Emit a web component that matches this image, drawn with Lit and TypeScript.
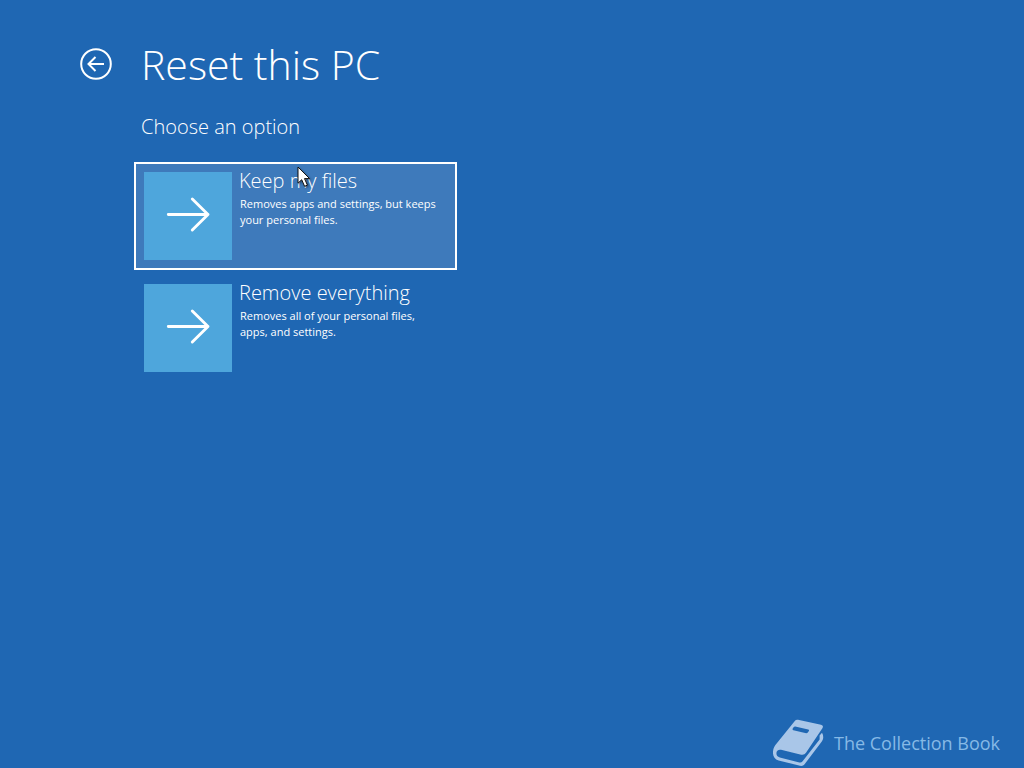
import { LitElement, html, css, svg } from "lit";
import { customElement, property, state } from "lit/decorators.js";
import { classMap } from "lit/directives/class-map.js";

interface ResetOption {
  id: string;
  title: string;
  description: string;
}

const OPTIONS: ResetOption[] = [
  {
    id: "keep",
    title: "Keep my files",
    description: "Removes apps and settings, but keeps your personal files.",
  },
  {
    id: "remove",
    title: "Remove everything",
    description: "Removes all of your personal files, apps, and settings.",
  },
];

@customElement("option-tile")
export class OptionTile extends LitElement {
  @property() heading = "";
  @property() description = "";
  @property({ type: Boolean }) selected = false;

  static styles = css`
    :host {
      display: block;
    }
    .tile {
      display: flex;
      align-items: flex-start;
      gap: 7px;
      box-sizing: border-box;
      width: 100%;
      padding: 8px;
      border: 2px solid transparent;
      background: none;
      color: #fff;
      font: inherit;
      text-align: left;
      outline: none;
      cursor: pointer;
    }
    .tile.selected {
      border-color: #fff;
      background: #3e7abb;
    }
    .icon {
      flex: none;
      width: 88px;
      height: 88px;
      background: #4ea6dc;
    }
    .icon svg {
      display: block;
    }
    .text {
      display: flex;
      flex-direction: column;
      min-width: 0;
      padding-right: 8px;
    }
    .heading {
      font-size: 20px;
      line-height: 18px;
      font-weight: 300;
      padding-bottom: 6px;
    }
    .description {
      font-size: 11px;
      line-height: 16px;
      padding-left: 1px;
    }
  `;

  render() {
    return html`
      <button class=${classMap({ tile: true, selected: this.selected })} type="button">
        <span class="icon">
          <svg width="88" height="88" viewBox="0 0 88 88" fill="none" aria-hidden="true">
            <path
              d="M24.3 42.5H64M48.3 27L64 42.5L48.3 58"
              stroke="#fff"
              stroke-width="2.9"
              stroke-linecap="round"
              stroke-linejoin="round"
            />
          </svg>
        </span>
        <span class="text">
          <span class="heading">${this.heading}</span>
          <span class="description">${this.description}</span>
        </span>
      </button>
    `;
  }
}

const pointer = svg`
  <path
    d="M1 1V17.2L4.7 13.7L7.6 20.3L10.4 19.1L7.5 12.6H12.6Z"
    fill="#fff" stroke="#111" stroke-width="1"
  />
`;

@customElement("app-root")
export class AppRoot extends LitElement {
  @state() private selected = "keep";

  static styles = css`
    :host {
      display: flex;
      flex-direction: column;
      box-sizing: border-box;
      min-height: 100vh;
      background: #1f67b3;
      color: #fff;
      font-family: "Open Sans", "Noto Sans", sans-serif;
    }
    .page {
      flex: 1;
      padding: 34px 80px 0;
    }
    .header {
      display: flex;
      align-items: center;
      gap: 29px;
    }
    .back {
      width: 32px;
      height: 32px;
      padding: 0;
      border: 0;
      background: none;
      cursor: pointer;
    }
    .back svg {
      display: block;
    }
    .title {
      margin: 0;
      font-size: 41px;
      line-height: 60px;
      font-weight: 300;
    }
    .subtitle {
      margin: 19px 0 0 61px;
      font-size: 20px;
      line-height: 28px;
      font-weight: 300;
    }
    .options-area {
      position: relative;
      max-width: 323px;
      margin: 21px 0 0 54px;
    }
    .options {
      display: flex;
      flex-direction: column;
      gap: 4px;
      margin: 0;
      padding: 0;
      list-style: none;
    }
    .pointer {
      position: absolute;
      left: 163px;
      top: 4px;
      pointer-events: none;
      filter: drop-shadow(1px 1px 1px rgba(0, 0, 0, 0.4));
    }
    .credit {
      display: flex;
      align-items: center;
      justify-content: flex-end;
      gap: 9px;
      padding: 0 24px 0 0;
      color: #86b9e6;
      font-size: 18px;
      line-height: 24px;
    }
  `;

  render() {
    return html`
      <main class="page">
        <header class="header">
          <button class="back" type="button" aria-label="Back">
            <svg width="32" height="32" viewBox="0 0 32 32" fill="none" stroke="#fff" aria-hidden="true">
              <circle cx="16" cy="16" r="14.8" stroke-width="2" />
              <path d="M8.5 16H24M15.5 9L8.5 16L15.5 23" stroke-width="2" />
            </svg>
          </button>
          <h1 class="title">Reset this PC</h1>
        </header>
        <h2 class="subtitle">Choose an option</h2>
        <div class="options-area">
          <ul class="options">
            ${OPTIONS.map(
              (option) => html`
                <li>
                  <option-tile
                    .heading=${option.title}
                    .description=${option.description}
                    .selected=${this.selected === option.id}
                    @click=${() => (this.selected = option.id)}
                  ></option-tile>
                </li>
              `
            )}
          </ul>
          <svg class="pointer" width="16" height="24" viewBox="0 0 16 24" aria-hidden="true">${pointer}</svg>
        </div>
      </main>
      <footer class="credit">
        <svg width="52" height="50" viewBox="0 0 52 50" fill="none" aria-hidden="true">
          <path
            fill-rule="evenodd"
            fill="#a9c6e8"
            d="M21.6 3.2Q23 1.4 25 1.8L48 6.8Q51 7.6 49.4 10.2L33 34.8Q31.2 37.4 28.2 36.7L8 31.8Q4.8 31.2 3.8 33.6C2.8 36.4 3.8 38.6 6.8 39.5L26.4 44.4Q28.4 44.8 29.6 43.2L46.6 21.6V17.6L49 14.8Q50.4 17 50.2 20Q50 22 48.8 23.4L31.6 46.2Q30 48.4 27 47.8L5.6 42.4C.4 40.8-.8 36.4.4 31Q1 28.8 2.4 27ZM22.2 8.4Q21 8.4 20.4 9.4L19.6 10.8Q19.4 12 20.4 12.2L33.2 15.2Q34.4 15.2 35 14.2L36 12.8Q36.2 11.8 35.2 11.5Z"
          />
        </svg>
        <span>The Collection Book</span>
      </footer>
    `;
  }
}
